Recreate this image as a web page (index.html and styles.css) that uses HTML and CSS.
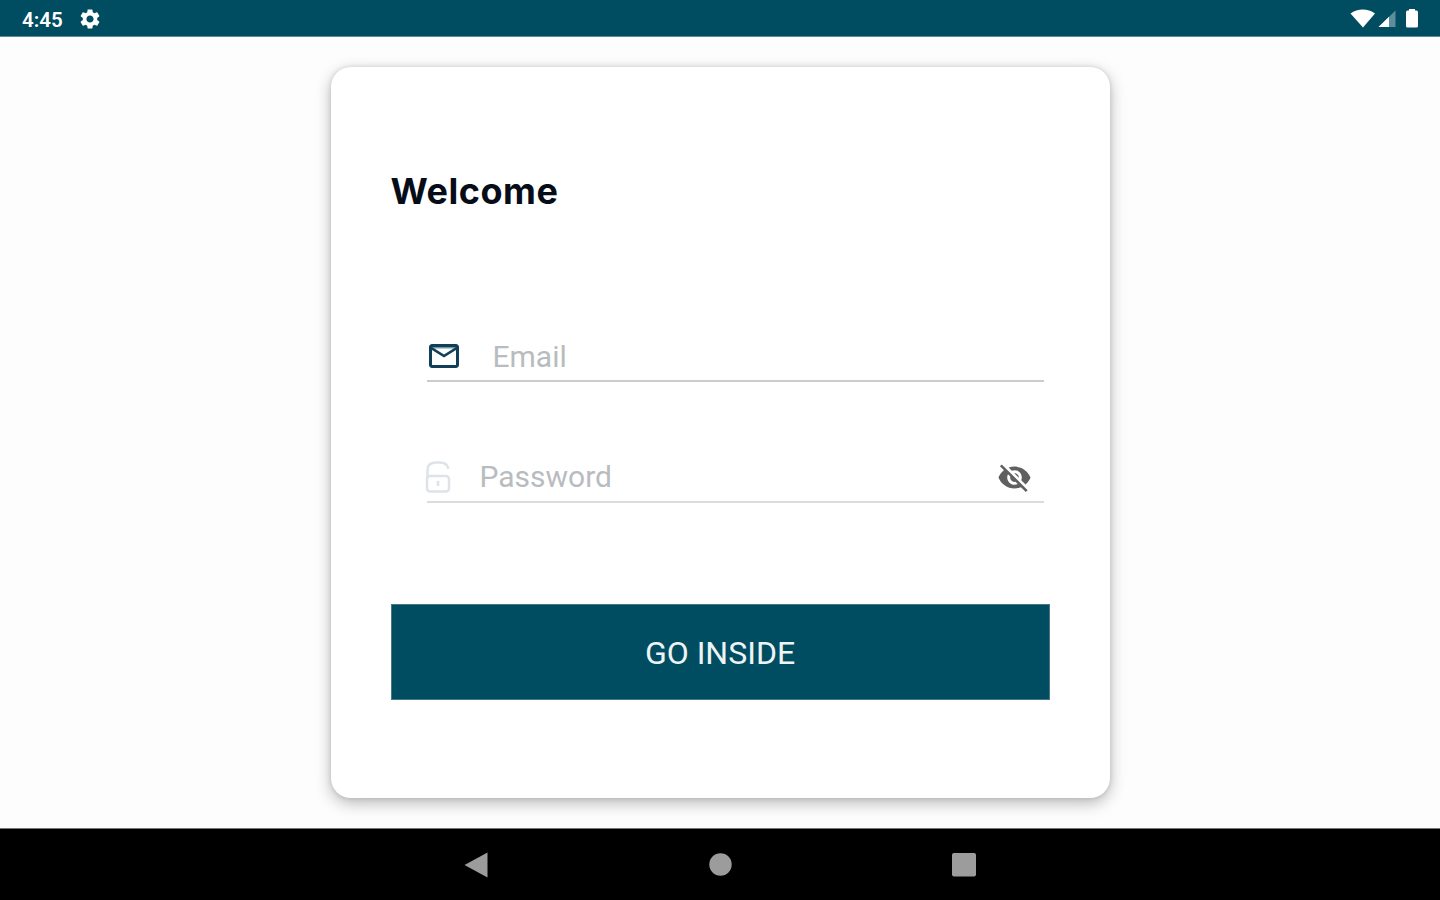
FILE: index.html
```html
<!DOCTYPE html>
<html lang="en">
<head>
  <meta charset="UTF-8">
  <meta name="viewport" content="width=device-width, initial-scale=1.0">
  <title>Login</title>
  <link rel="stylesheet" href="styles.css">
</head>
<body>

<header class="status-bar">
  <span class="clock">4:45</span>
  <svg class="gear" width="24" height="24" viewBox="0 0 24 24">
    <path fill="#fff" d="M19.14 12.94c.04-.3.06-.61.06-.94s-.02-.64-.07-.94l2.03-1.58c.18-.14.23-.41.12-.61l-1.92-3.32c-.12-.22-.37-.29-.59-.22l-2.39.96c-.5-.38-1.03-.7-1.62-.94l-.36-2.54c-.04-.24-.24-.41-.48-.41h-3.84c-.24 0-.43.17-.47.41l-.36 2.54c-.59.24-1.13.57-1.62.94l-2.39-.96c-.22-.08-.47 0-.59.22L2.74 8.87c-.12.21-.08.47.12.61l2.03 1.58c-.05.3-.09.63-.09.94s.02.64.07.94l-2.03 1.58c-.18.14-.23.41-.12.61l1.92 3.32c.12.22.37.29.59.22l2.39-.96c.5.38 1.03.7 1.62.94l.36 2.54c.05.24.24.41.48.41h3.84c.24 0 .44-.17.47-.41l.36-2.54c.59-.24 1.13-.56 1.62-.94l2.39.96c.22.08.47 0 .59-.22l1.92-3.32c.12-.22.07-.47-.12-.61l-2.01-1.58zM12 15.6c-1.98 0-3.6-1.62-3.6-3.6s1.62-3.6 3.6-3.6 3.6 1.62 3.6 3.6-1.62 3.6-3.6 3.6z"/>
  </svg>
  <svg class="system-icons" width="70" height="24" viewBox="0 0 70 24">
    <!-- wifi -->
    <path fill="#fff" d="M0.500 7.500C7.500 2 18 2 25 7.500L13 21.500z"/>
    <!-- signal -->
    <path fill="#5c8e9c" d="M45.500 4.500V21H28.500z"/>
    <path fill="#fff" d="M39 10.800V21H28.500z"/>
    <!-- battery -->
    <path fill="#fff" d="M59 3h6v1.500h1.500q1.500 0 1.500 1.500V20q0 1.500-1.500 1.500h-9Q56 21.500 56 20V6q0-1.500 1.500-1.500H59z"/>
  </svg>
</header>

<main class="screen">
  <form class="card" name="loginForm" onsubmit="return false">
    <h1>Welcome</h1>

    <div class="field email">
      <svg width="36" height="36" viewBox="0 0 24 24">
        <path fill="#7297a5" d="M4 5h16v2H4z"/>
        <path fill="#123f58" d="M20 4H4c-1.100 0-2 .9-2 2v12c0 1.100.9 2 2 2h16c1.100 0 2-.9 2-2V6c0-1.100-.9-2-2-2zm0 14H4V8l8 5 8-5v10zm-8-7L4 6h16l-8 5z"/>
      </svg>
      <input type="email" placeholder="Email" aria-label="Email">
    </div>

    <div class="field password">
      <svg class="lock" width="26" height="34" viewBox="0 0 26 34" fill="none" stroke="#dfe3e7" stroke-width="2.500">
        <rect x="2" y="16" width="22" height="15.500" rx="3"/>
        <path d="M2.500 18V10Q2.500 2.500 11 2.500h4Q22 2.500 23.500 9M13 21v5"/>
      </svg>
      <input type="password" placeholder="Password" aria-label="Password">
      <svg class="eye" width="35" height="35" viewBox="0 0 24 24">
        <path fill="#606060" d="M12 7c2.760 0 5 2.240 5 5 0 .65-.13 1.260-.36 1.830l2.920 2.920c1.510-1.260 2.700-2.890 3.430-4.750-1.730-4.390-6-7.500-11-7.500-1.400 0-2.740.25-3.980.7l2.160 2.160C10.740 7.130 11.350 7 12 7zM2 4.270l2.280 2.280.46.46C3.080 8.300 1.780 10.020 1 12c1.730 4.390 6 7.500 11 7.500 1.550 0 3.030-.3 4.380-.84l.42.42L19.730 22 21 20.730 3.270 3 2 4.270zM7.530 9.800l1.550 1.550c-.05.21-.08.43-.08.65 0 1.660 1.340 3 3 3 .22 0 .44-.03.65-.08l1.550 1.550c-.67.33-1.410.53-2.200.53-2.760 0-5-2.240-5-5 0-.79.2-1.530.53-2.200zm4.310-.78l3.150 3.150.02-.16c0-1.660-1.340-3-3-3l-.17.01z"/>
      </svg>
    </div>

    <button>GO INSIDE</button>
  </form>
</main>

<nav class="nav-bar">
  <svg width="24" height="26" viewBox="0 0 24 26"><path fill="#9c9c9c" d="M0.500 13L23.500 0.500v25z"/></svg>
  <svg width="24" height="24" viewBox="0 0 24 24"><circle fill="#9c9c9c" cx="12.500" cy="11.500" r="11.200"/></svg>
  <svg width="24" height="24" viewBox="0 0 24 24"><rect fill="#9c9c9c" width="24" height="23.500" rx="2"/></svg>
</nav>

</body>
</html>
```

FILE: styles.css
```css
body {
  font-family: Roboto, sans-serif;
  background-color: #fdfdfd;
  margin: 0;
  height: 100vh;
  display: flex;
  flex-direction: column;
  overflow: hidden;
}

.status-bar {
  box-sizing: border-box;
  height: 37px;
  padding: 0 20px 0 22px;
  background-color: #004d61;
  border-bottom: 1px solid #5f8795;
  display: flex;
  align-items: center;
}

.clock {
  color: #fff;
  font-size: 20.5px;
  font-weight: 600;
  line-height: 24px;
  padding-top: 3px;
}

.gear {
  margin-left: 15px;
  padding-top: 1px;
}

.system-icons {
  margin-left: auto;
}

.screen {
  flex: 1;
  display: flex;
  justify-content: center;
  align-items: center;
}

.card {
  box-sizing: border-box;
  width: 779px;
  height: 731px;
  padding: 102px 60px 0;
  background-color: #fff;
  border-radius: 20px;
  box-shadow: 0 5px 16px rgba(0, 0, 0, 0.28), 0 0 5px rgba(0, 0, 0, 0.12);
}

h1 {
  margin: 0;
  color: #060d18;
  font-family: Inter, Roboto, sans-serif;
  font-size: 36px;
  line-height: 44px;
  letter-spacing: 0.5px;
}

.field {
  box-sizing: border-box;
  height: 50px;
  margin: 0 6px 0 36px;
  border-bottom: 2px solid #cbcccd;
  display: flex;
  align-items: center;
}

.email {
  margin-top: 119px;
}

.email svg {
  margin-left: -1px;
}

.email input {
  padding-left: 31px;
}

.password {
  margin-top: 71px;
  border-color: #dcdcdc;
}

.lock {
  margin-left: -2px;
}

.eye {
  margin-right: 12px;
}

input {
  flex: 1;
  min-width: 0;
  padding: 0 0 0 29px;
  border: none;
  outline: none;
  background: none;
  font-family: inherit;
  font-size: 30px;
  color: #333;
}

.password input {
  padding-bottom: 2px;
}

input::placeholder {
  color: #b9bcbf;
}

button {
  display: block;
  width: 659px;
  height: 96px;
  margin-top: 101px;
  padding: 2px 0 0;
  border: 1px solid #467887;
  background-color: #004d61;
  color: #eef4f6;
  font-family: inherit;
  font-size: 32px;
}

.nav-bar {
  box-sizing: border-box;
  height: 72px;
  border-top: 1px solid #777;
  background-color: #000;
  display: flex;
  justify-content: center;
  align-items: center;
  gap: 220px;
}
```
